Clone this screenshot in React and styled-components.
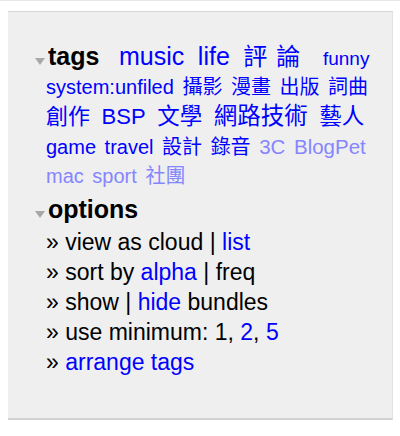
import React from "react";
import styled, { createGlobalStyle } from "styled-components";

const GlobalStyle = createGlobalStyle`
  html, body {
    margin: 0;
    padding: 0;
    background: #fff;
  }
  body {
    font-family: "Liberation Sans", Arial, "Noto Sans CJK TC", sans-serif;
    color: #000;
  }
`;

const tags = [
  { name: "music", size: 25 },
  { name: "life", size: 25 },
  { name: "評論", size: 24, spacing: 9 },
  { name: "funny", size: 19 },
  { name: "system:unfiled", size: 20 },
  { name: "攝影", size: 20 },
  { name: "漫畫", size: 20 },
  { name: "出版", size: 20 },
  { name: "詞曲", size: 20 },
  { name: "創作", size: 22 },
  { name: "BSP", size: 22 },
  { name: "文學", size: 22.5 },
  { name: "網路技術", size: 23.5 },
  { name: "藝人", size: 22.5 },
  { name: "game", size: 20 },
  { name: "travel", size: 20 },
  { name: "設計", size: 20 },
  { name: "錄音", size: 20 },
  { name: "3C", size: 20.5, faded: true },
  { name: "BlogPet", size: 20.5, faded: true },
  { name: "mac", size: 20, faded: true },
  { name: "sport", size: 20, faded: true },
  { name: "社團", size: 20, faded: true },
];

const Page = styled.div`
  border-top: 1px solid #e6e6e6;
  padding: 10px 7px 0 8px;
`;

const Panel = styled.div`
  background: #efefef;
  border-top: 1px solid #d8d8d8;
  border-right: 1px solid #e2e2e2;
  border-bottom: 2px solid #d2d2d2;
  padding: 30px 4px 41px 38px;
`;

const Cloud = styled.div`
  font-size: 20px;
  line-height: 29px;
`;

const Heading = styled.span`
  display: inline-block;
  font-size: 25px;
  font-weight: bold;
  margin-left: -11px;
  margin-right: 14px;
`;

const Toggle = styled.span`
  display: inline-block;
  width: 0;
  height: 0;
  border-left: 5px solid transparent;
  border-right: 5px solid transparent;
  border-top: 7px solid #a8a8a8;
  margin-right: 3px;
  vertical-align: baseline;
`;

const Tag = styled.a`
  font-size: ${(p) => p.$size}px;
  letter-spacing: ${(p) => p.$spacing || 0}px;
  margin-right: ${(p) => (p.$size >= 24 ? 8 : p.$size >= 21 ? 6 : 3)}px;
  color: ${(p) => (p.$faded ? "#8585ff" : "#0000ff")};
  text-decoration: none;
  white-space: nowrap;
  cursor: pointer;
`;

const Options = styled.div`
  margin-top: 2px;
  font-size: 23px;
  line-height: 30px;
`;

const OptionsHead = styled.div`
  line-height: 33px;
`;

const Row = styled.div`
  white-space: nowrap;
`;

const Link = styled.a`
  color: #0000ff;
  text-decoration: none;
  cursor: pointer;
`;

export default function App() {
  return (
    <>
      <GlobalStyle />
      <Page>
        <Panel>
          <Cloud>
            <Heading>
              <Toggle />
              tags
            </Heading>{" "}
            {tags.map((t) => (
              <React.Fragment key={t.name}>
                <Tag $size={t.size} $spacing={t.spacing} $faded={t.faded}>
                  {t.name}
                </Tag>{" "}
              </React.Fragment>
            ))}
          </Cloud>
          <Options>
            <OptionsHead>
              <Heading>
                <Toggle />
                options
              </Heading>
            </OptionsHead>
            <Row>
              » view as cloud | <Link>list</Link>
            </Row>
            <Row>
              » sort by <Link>alpha</Link> | freq
            </Row>
            <Row>
              » show | <Link>hide</Link> bundles
            </Row>
            <Row>
              » use minimum: 1, <Link>2</Link>, <Link>5</Link>
            </Row>
            <Row>
              » <Link>arrange tags</Link>
            </Row>
          </Options>
        </Panel>
      </Page>
    </>
  );
}
